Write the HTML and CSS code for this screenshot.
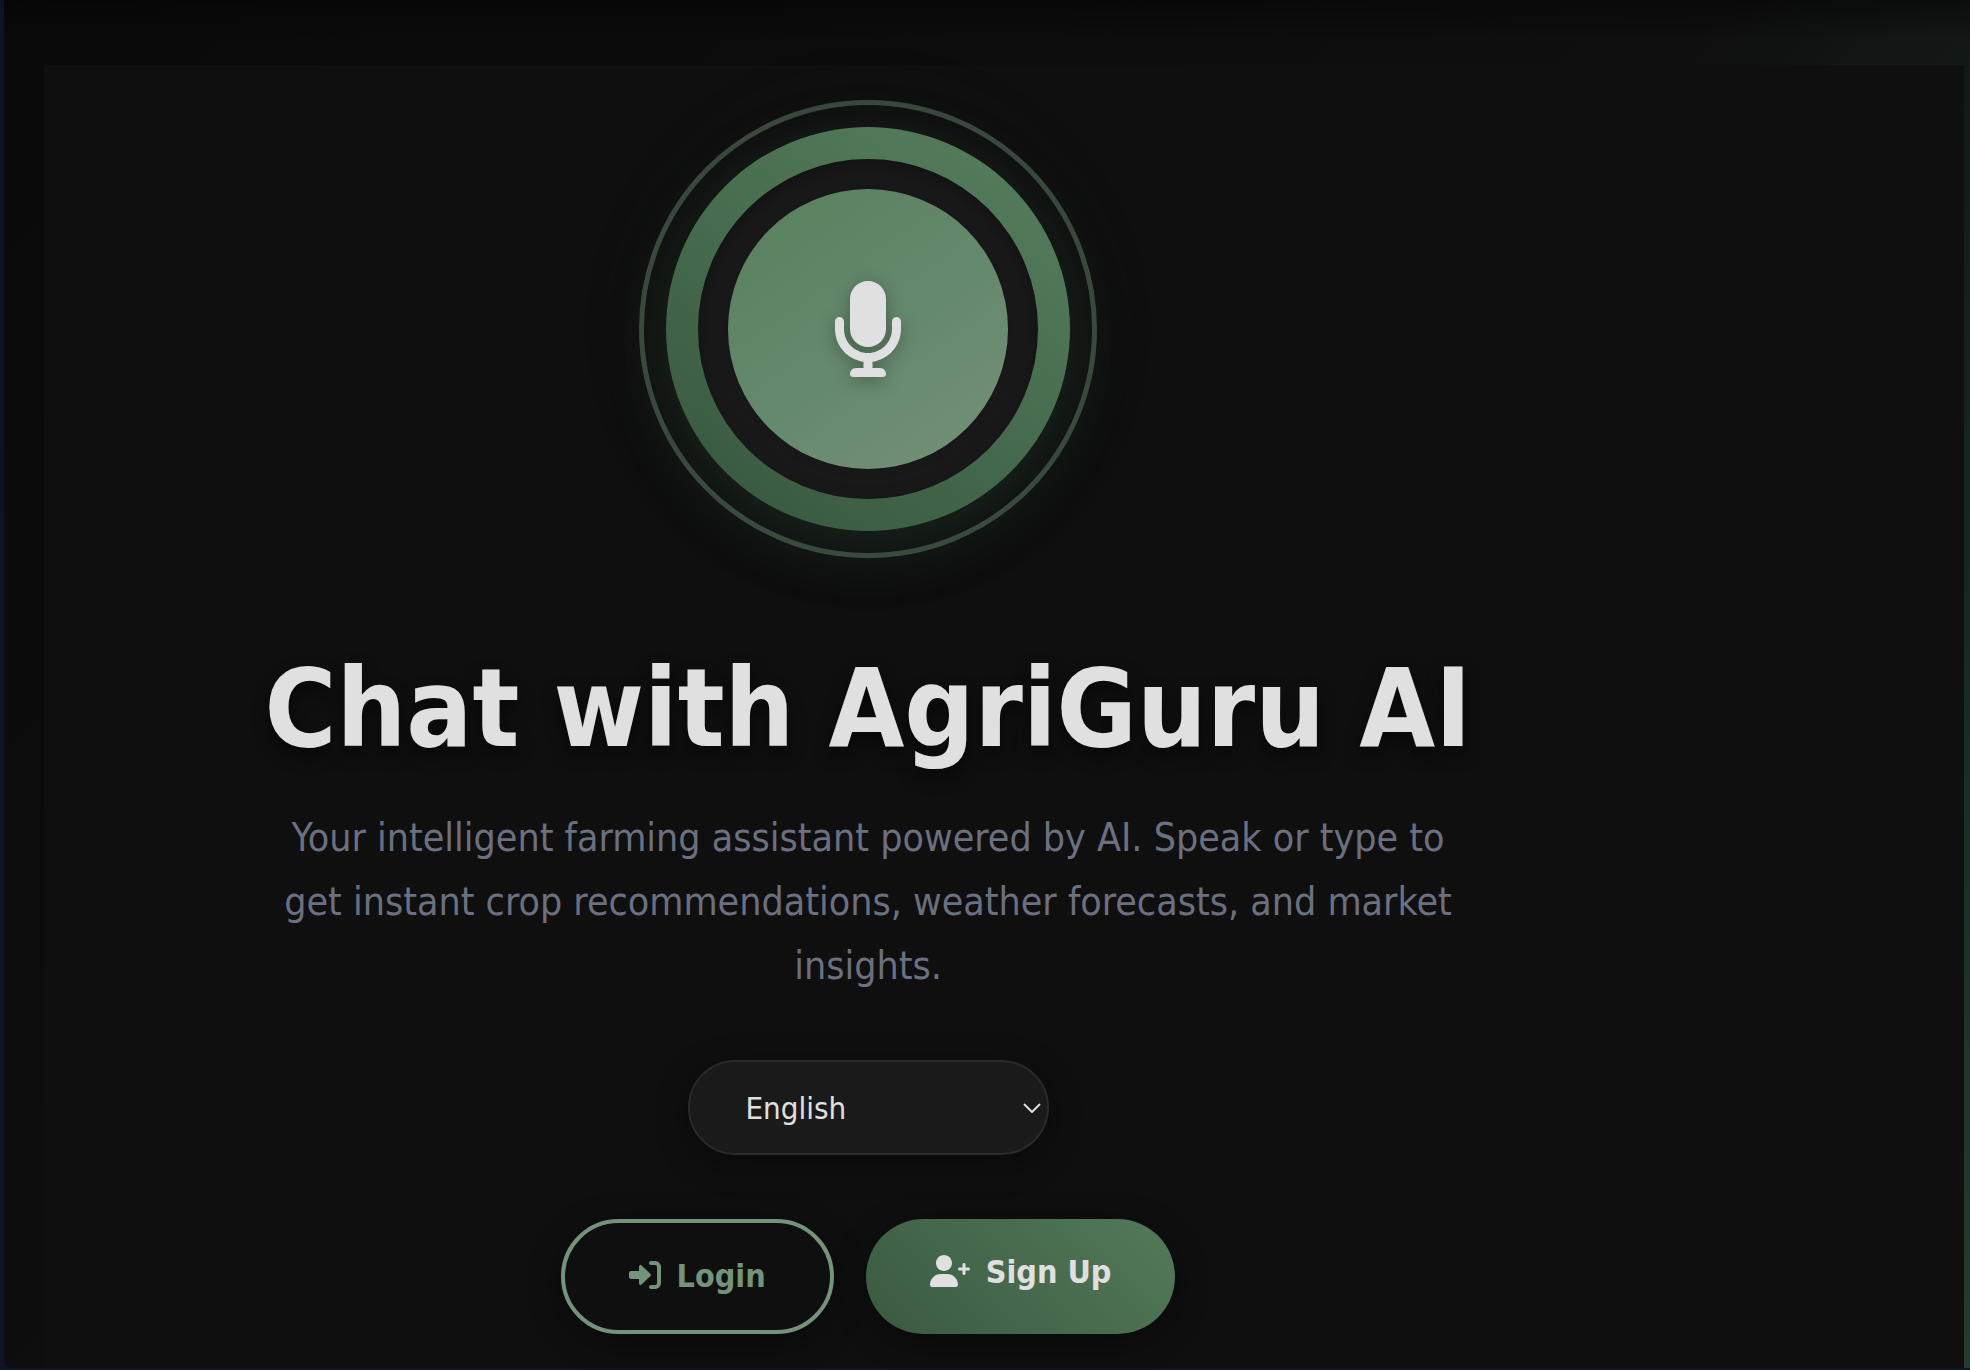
FILE: index.html
```html
<!DOCTYPE html>
<html lang="en">
<head>
<meta charset="utf-8">
<meta name="viewport" content="width=device-width, initial-scale=1">
<title>AgriGuru AI</title>
<link rel="stylesheet" href="styles.css">
</head>
<body>
<div class="frame">
  <main class="panel">
    <section class="hero">
      <button class="voice" type="button" aria-label="Start voice chat">
        <span class="voice-ring">
          <span class="voice-well">
            <span class="voice-core">
              <svg class="voice-icon" viewBox="0 0 384 512" aria-hidden="true"><path d="M192 352c53 0 96-43 96-96V96c0-53-43-96-96-96S96 43 96 96v160c0 53 43 96 96 96zM344 192c-13.300 0-24 10.700-24 24v40c0 70.700-57.300 128-128 128S64 326.700 64 256v-40c0-13.300-10.700-24-24-24s-24 10.700-24 24v40c0 89.100 66.200 162.700 152 174.400V464h-40c-18.200 0-32.800 15.200-32 33.600.4 8.200 7.800 14.400 16 14.400h160c8.200 0 15.600-6.200 16-14.400.8-18.400-13.800-33.600-32-33.600h-40v-33.600c85.800-11.700 152-85.300 152-174.400v-40c0-13.300-10.700-24-24-24z"/></svg>
            </span>
          </span>
        </span>
      </button>
      <h1 class="title">Chat with AgriGuru AI</h1>
      <p class="subtitle">Your intelligent farming assistant powered by AI. Speak or type to get instant crop recommendations, weather forecasts, and market insights.</p>
      <div class="language">
        <select class="language-select" aria-label="Language">
          <option>English</option>
        </select>
        <svg class="language-arrow" viewBox="0 0 18 10" aria-hidden="true"><path d="M1 1l8 8 8-8"/></svg>
      </div>
      <nav class="actions">
        <a class="btn btn-outline" href="#login"><svg class="btn-icon" viewBox="0 0 512 512" aria-hidden="true"><path d="M344.700 238.500l-144.100-136C193.700 96 183.400 94.200 174.600 98c-8.800 3.800-14.500 12.400-14.500 22v72H32c-17.700 0-32 14.300-32 32v64c0 17.700 14.300 32 32 32h128.100v72c0 9.600 5.700 18.300 14.500 22 8.800 3.800 19 2 26-4.600l144.100-136c9.600-9 9.600-25.800 0-34.900zM416 32h-64c-17.700 0-32 14.300-32 32s14.300 32 32 32h64c17.700 0 32 14.300 32 32v256c0 17.700-14.300 32-32 32h-64c-17.700 0-32 14.300-32 32s14.300 32 32 32h64c53 0 96-43 96-96V128c0-53-43-96-96-96z"/></svg>Login</a>
        <a class="btn btn-solid" href="#signup"><svg class="btn-icon btn-icon-wide" viewBox="0 0 640 512" aria-hidden="true"><path d="M224 256c70.700 0 128-57.300 128-128S294.700 0 224 0 96 57.300 96 128s57.300 128 128 128zM274.700 304H173.300C77.600 304 0 381.600 0 477.300 0 496.500 15.500 512 34.700 512h378.600c19.200 0 34.700-15.500 34.700-34.700C448 381.600 370.400 304 274.700 304zM616 200h-48v-48c0-13.200-10.700-24-24-24s-24 10.800-24 24v48h-48c-13.200 0-24 10.800-24 24s10.800 24 24 24h48v48c0 13.300 10.800 24 24 24s24-10.700 24-24v-48h48c13.300 0 24-10.700 24-24s-10.700-24-24-24z"/></svg>Sign Up</a>
      </nav>
    </section>
  </main>
</div>
</body>
</html>
```
FILE: styles.css
```css
* {
  box-sizing: border-box;
}

body {
  margin: 0;
  min-height: 100vh;
  display: flex;
  background: #0e1426;
  color: #e0e0e0;
  font-family: "DejaVu Sans Condensed", Tahoma, "DejaVu Sans", sans-serif;
}

.frame {
  flex: 1;
  margin: 0 0 2px 4px;
  padding: 65px 6px 0 40px;
  display: flex;
  border-bottom-left-radius: 8px;
  background:
    linear-gradient(rgba(0, 0, 0, 0.4), rgba(0, 0, 0, 0) 40px),
    linear-gradient(135deg, #0a0a0a 0%, #0c0c0c 30%, #0f0f0f 52%, #131a18 62%, #243c2e 100%);
}

.panel {
  flex: 1;
  padding: 35px 272px 30px 0;
  background: #0f0f0f;
}

.hero {
  max-width: 1200px;
  margin: 0 auto;
  display: flex;
  flex-direction: column;
  align-items: center;
  text-align: center;
}

.voice {
  padding: 22px;
  border: 5px solid #3a483e;
  border-radius: 50%;
  background: none;
  color: inherit;
  cursor: pointer;
}

.voice-ring,
.voice-well,
.voice-core {
  display: grid;
  place-items: center;
  border-radius: 50%;
}

.voice-ring {
  padding: 32px;
  background: linear-gradient(35deg, #3b5c42 15%, #527a5a 85%);
  box-shadow: 0 16px 64px rgba(58, 110, 72, 0.2), 0 0 120px rgba(88, 129, 100, 0.06);
}

.voice-well {
  padding: 30px;
  background: #1a1a1a;
  box-shadow: inset 0 4px 16px rgba(0, 0, 0, 0.4);
}

.voice-core {
  width: 280px;
  height: 280px;
  background: linear-gradient(145deg, #5a8160 10%, #678a6f 60%, #739077 95%);
  box-shadow: 0 0 24px rgba(0, 0, 0, 0.2);
}

.voice-icon {
  width: 72px;
  height: 96px;
  fill: #e0e0e0;
  filter: drop-shadow(0 4px 8px rgba(0, 0, 0, 0.3));
}

.title {
  margin: 84px 0 30px;
  font-size: 109px;
  line-height: 134px;
  font-weight: 700;
  white-space: nowrap;
  text-shadow: 0 8px 16px rgba(0, 0, 0, 0.5);
}

.subtitle {
  margin: 0 0 62px;
  color: #6b7080;
  font-size: 39px;
  line-height: 64px;
}

.language {
  display: grid;
  align-items: center;
  margin-bottom: 64px;
}

.language-select,
.language-arrow {
  grid-area: 1 / 1;
}

.language-select {
  appearance: none;
  width: 361px;
  height: 95px;
  padding: 0 56px;
  border: 2px solid #2a2a2a;
  border-radius: 48px;
  background: #1a1a1a;
  color: #e0e0e0;
  font: inherit;
  font-size: 31px;
  box-shadow: 0 8px 32px rgba(0, 0, 0, 0.4);
}

.language-arrow {
  justify-self: end;
  width: 18px;
  height: 10px;
  margin-right: 8px;
  fill: none;
  stroke: #e0e0e0;
  stroke-width: 2;
  pointer-events: none;
}

.actions {
  display: flex;
  gap: 32px;
}

.btn {
  padding: 32px 64px;
  border-radius: 58px;
  font-size: 32px;
  line-height: 43px;
  font-weight: 700;
  text-decoration: none;
  white-space: nowrap;
  box-shadow: 0 8px 32px rgba(0, 0, 0, 0.4);
}

.btn-outline {
  border: 4px solid #74937b;
  color: #74937b;
}

.btn-solid {
  background: linear-gradient(45deg, #3a5a40, #54795a);
  color: #e0e0e0;
}

.btn-icon {
  width: 32px;
  height: 32px;
  margin-right: 16px;
  fill: currentColor;
  vertical-align: -4px;
}

.btn-icon-wide {
  width: 40px;
}
```
